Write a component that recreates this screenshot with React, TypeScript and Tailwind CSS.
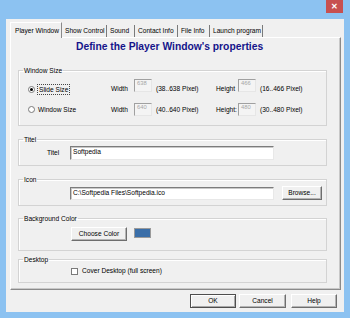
import type { ReactNode } from "react"

const btn =
  "flex items-center justify-center border border-t-white border-l-white border-r-[#6e6e6e] border-b-[#6e6e6e] bg-[#f0f0f0] shadow-[inset_-1px_-1px_0_#b4b4b4]"

function Group({ label, className, children }: { label: string; className?: string; children: ReactNode }) {
  return (
    <fieldset className={`w-[309px] border border-[#d3d3d3] shadow-[inset_1px_1px_0_#ffffff] ${className ?? ""}`}>
      <legend className="ml-[4px] px-[1px] leading-[9px]">{label}</legend>
      {children}
    </fieldset>
  )
}

function Radio({ checked }: { checked?: boolean }) {
  return (
    <span className="flex h-[7px] w-[7px] items-center justify-center rounded-full border border-[#7a7a7a] bg-white">
      {checked && <span className="h-[3px] w-[3px] rounded-full bg-black" />}
    </span>
  )
}

function SmallInput({ value }: { value: string }) {
  return (
    <div className="h-[13px] w-[18px] self-start border border-t-[#a0a0a0] border-l-[#a0a0a0] border-r-[#e6e6e6] border-b-[#e6e6e6] bg-[#f4f4f4] pl-[2px] text-[5.8px] leading-[7px] text-[#a6a6a6]">
      {value}
    </div>
  )
}

function TextBox({ value, className }: { value: string; className?: string }) {
  return (
    <div
      className={`w-[204px] border border-t-[#7c7c7c] border-l-[#7c7c7c] border-r-[#e8e8e8] border-b-[#e8e8e8] bg-white pl-[2px] leading-[9px] shadow-[inset_1px_1px_0_#c8c8c8] ${className ?? ""}`}
    >
      {value}
    </div>
  )
}

const tabs = [
  { name: "Show Control", w: "w-[45px]" },
  { name: "Sound", w: "w-[28px]" },
  { name: "Contact Info", w: "w-[43px]" },
  { name: "File Info", w: "w-[32px]" },
  { name: "Launch program", w: "w-[53px]" },
]

export default function App() {
  return (
    <div className="flex h-[318px] w-[350px] flex-col bg-[#8cc2f1] font-['Liberation_Sans',Arial,sans-serif] text-[6.6px] text-black">
      {/* title bar */}
      <div className="flex h-[19px] justify-end pr-[7px]">
        <div className="flex h-[13px] w-[17px] items-center justify-center bg-[#c75050] text-[8px] font-bold leading-none text-white">
          ✕
        </div>
      </div>

      {/* client area */}
      <div className="mx-[6px] flex h-[293px] flex-col bg-[#f0f0f0] px-[4px] pt-[3px]">
        {/* tabs */}
        <div className="relative z-10 flex h-[15px] items-end">
          <div className="-mb-px flex h-[16px] w-[52px] items-center border-t border-l border-r border-t-white border-l-white border-r-[#8a8a8a] bg-[#f0f0f0] pl-[4px]">
            Player Window
          </div>
          {tabs.map((t) => (
            <div
              key={t.name}
              className={`flex h-[12px] items-center border-r border-r-[#7a7a7a] pl-[3px] ${t.w}`}
            >
              {t.name}
            </div>
          ))}
        </div>

        {/* panel */}
        <div className="flex h-[253px] w-[331px] flex-col border border-t-white border-l-white border-r-[#8a8a8a] border-b-[#8a8a8a] pl-[7px] shadow-[inset_-1px_-1px_0_#c8c8c8]">
          <div className="ml-[58px] mt-[3px] text-[10.3px] font-bold leading-[12px] text-[#14148a]">
            Define the Player Window's properties
          </div>

          <Group label="Window Size" className="mt-[13px]">
            <div className="pt-[4px] pb-[8px]">
              <div className="flex h-[20px] items-center">
                <div className="flex w-[92px] items-center pl-[9px]">
                  <Radio checked />
                  <span className="ml-[2px] border border-dotted border-[#444] px-[1px] leading-[9px]">Slide Size</span>
                </div>
                <span className="w-[23px]">Width</span>
                <SmallInput value="638" />
                <span className="ml-[4px] w-[60px]">(38..638 Pixel)</span>
                <span className="w-[22px]">Height</span>
                <SmallInput value="466" />
                <span className="ml-[4px]">(16..466 Pixel)</span>
              </div>
              <div className="mt-[4px] flex h-[14px] items-center">
                <div className="flex w-[92px] items-center pl-[9px]">
                  <Radio />
                  <span className="ml-[3px]">Window Size</span>
                </div>
                <span className="w-[23px]">Width</span>
                <SmallInput value="640" />
                <span className="ml-[4px] w-[60px]">(40..640 Pixel)</span>
                <span className="w-[22px]">Height:</span>
                <SmallInput value="480" />
                <span className="ml-[4px]">(30..480 Pixel)</span>
              </div>
            </div>
          </Group>

          <Group label="Titel" className="mt-[9px]">
            <div className="flex items-center pt-[2px] pb-[5px] pl-[28px]">
              <span className="w-[23px]">Titel</span>
              <TextBox value="Softpedia" className="h-[14px]" />
            </div>
          </Group>

          <Group label="Icon" className="mt-[9px]">
            <div className="flex items-end pt-[2px] pb-[5px] pl-[51px]">
              <TextBox value="C:\Softpedia Files\Softpedia.ico" className="h-[13px]" />
              <div className={`${btn} ml-[8px] h-[14px] w-[40px]`}>Browse...</div>
            </div>
          </Group>

          <Group label="Background Color" className="mt-[8px]">
            <div className="flex items-start pt-[4px] pb-[9px] pl-[52px]">
              <div className={`${btn} h-[14px] w-[56px]`}>Choose Color</div>
              <div className="ml-[7px] mt-[1px] h-[10px] w-[17px] border border-[#9a9a9a] bg-[#3a6ea8]" />
            </div>
          </Group>

          <Group label="Desktop" className="mt-[4px]">
            <div className="flex h-[18px] items-center pb-[6px] pl-[52px] pt-[2px]">
              <span className="h-[7px] w-[7px] border border-[#7a7a7a] bg-white" />
              <span className="ml-[4px]">Cover Desktop (full screen)</span>
            </div>
          </Group>
        </div>

        {/* dialog buttons */}
        <div className="mt-[4px] flex justify-end pr-[3px]">
          <div className="flex h-[14px] w-[46px] items-center justify-center border border-[#4e4e4e] bg-[#f0f0f0] shadow-[inset_1px_1px_0_#ffffff,inset_-1px_-1px_0_#a8a8a8]">
            OK
          </div>
          <div className={`${btn} ml-[3px] h-[14px] w-[47px]`}>Cancel</div>
          <div className={`${btn} ml-[5px] h-[14px] w-[46px]`}>Help</div>
        </div>
      </div>
    </div>
  )
}
